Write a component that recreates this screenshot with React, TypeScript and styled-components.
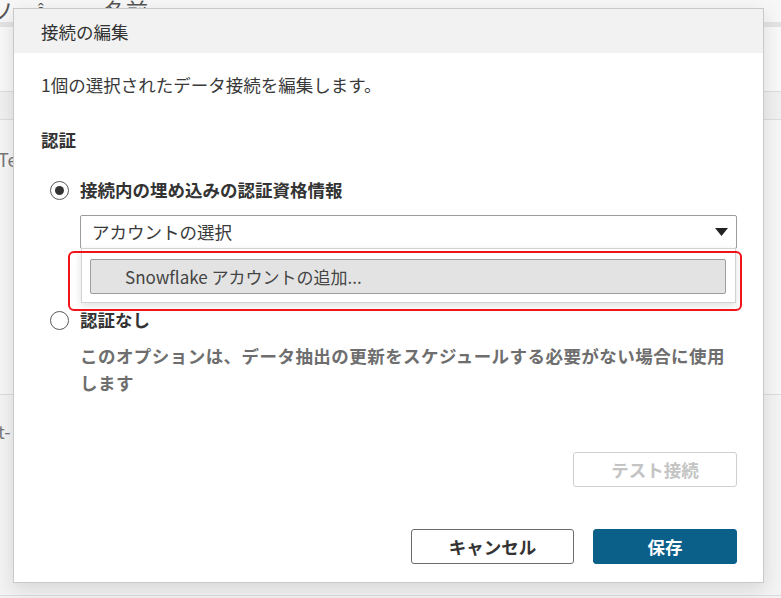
import React from 'react';
import styled, { createGlobalStyle } from 'styled-components';

const GlobalStyle = createGlobalStyle`
  html, body {
    margin: 0;
    padding: 0;
  }
  body {
    background: #f3f3f3;
    font-family: "Noto Sans CJK JP", "Noto Sans", sans-serif;
  }
`;

const Page = styled.div`
  position: relative;
  width: 781px;
  height: 598px;
  overflow: hidden;
  background: #f2f2f2;
`;

/* faded app behind the modal */
const Backdrop = styled.div`
  display: flex;
  flex-direction: column;
  height: 100%;
  color: #555;
`;

const BackTop = styled.div`
  display: flex;
  align-items: flex-end;
  height: 22px;
  background: #f7f7f7;
  font-size: 22px;
  line-height: 22px;
  overflow: hidden;
  white-space: nowrap;
`;

const BackGlyph = styled.span<{ $w: number; $size?: number; $shift?: number }>`
  display: block;
  flex-shrink: 0;
  width: ${({ $w }) => $w}px;
  font-size: ${({ $size }) => $size || 22}px;
  transform: translate(${({ $shift }) => $shift || 0}px, -2px);
`;

const BackBand = styled.div`
  height: 5px;
  background: #e3e3e3;
`;

const BackRow = styled.div<{ $h: number; $bg?: string }>`
  height: ${({ $h }) => $h}px;
  background: ${({ $bg }) => $bg || '#f5f5f5'};
  border-bottom: 1px solid #dcdcdc;
  display: flex;
  align-items: center;
  font-size: 18px;
  color: #777;
  white-space: nowrap;
`;

const BackLabel = styled.span<{ $x: number; $y: number }>`
  transform: translate(${({ $x }) => $x}px, ${({ $y }) => $y}px);
`;

const Modal = styled.div`
  position: absolute;
  left: 13px;
  top: 8px;
  width: 751px;
  height: 575px;
  box-sizing: border-box;
  background: #fff;
  border: 1px solid #c9c9c9;
  box-shadow: 0 6px 18px rgba(0, 0, 0, 0.12);
  display: flex;
  flex-direction: column;
`;

const Header = styled.div`
  height: 44px;
  flex-shrink: 0;
  background: #f2f2f2;
  display: flex;
  align-items: center;
  padding-left: 27px;
  font-size: 17.5px;
  color: #333;
`;

const Body = styled.div`
  flex: 1;
  display: flex;
  flex-direction: column;
  padding: 0 26px 18px 27px;
  color: #333;
  font-size: 17.5px;
  line-height: 24px;
`;

const Intro = styled.div`
  margin-top: 20px;
  color: #3a3a3a;
`;

const SectionTitle = styled.div`
  margin-top: 31px;
  font-weight: 700;
  color: #333;
`;

const RadioRow = styled.label<{ $top: number }>`
  display: flex;
  align-items: center;
  gap: 11px;
  margin-top: ${({ $top }) => $top}px;
  padding-left: 9px;
  font-weight: 700;
  color: #333;
`;

const RadioCircle = styled.span<{ $on?: boolean }>`
  width: 19px;
  height: 19px;
  box-sizing: border-box;
  border: 1.5px solid #5a5a5a;
  border-radius: 50%;
  display: flex;
  align-items: center;
  justify-content: center;
  background: #fff;

  &::after {
    content: '';
    width: 9px;
    height: 9px;
    border-radius: 50%;
    background: ${({ $on }) => ($on ? '#333' : 'transparent')};
  }
`;

const Indent = styled.div`
  padding-left: 39px;
`;

const SelectWrap = styled.div`
  position: relative;
  margin-top: 13px;
`;

const Select = styled.div`
  height: 34px;
  box-sizing: border-box;
  border: 1px solid #9c9c9c;
  border-radius: 2px;
  display: flex;
  align-items: center;
  justify-content: space-between;
  padding: 0 8px 0 11px;
  color: #3a3a3a;
`;

const Menu = styled.div`
  position: absolute;
  left: 1px;
  right: 1px;
  top: 33px;
  height: 55px;
  box-sizing: border-box;
  background: #fff;
  border: 1px solid #d2d2d2;
  box-shadow: 0 3px 8px rgba(0, 0, 0, 0.12);
  padding: 10px 9px 0 8px;
  z-index: 2;
`;

const MenuItem = styled.div`
  height: 35px;
  box-sizing: border-box;
  background: #e3e3e3;
  border: 1px solid #9d9d9d;
  border-radius: 2px;
  display: flex;
  align-items: center;
  padding-left: 34px;
  font-size: 17px;
  color: #444;
`;

const Highlight = styled.div`
  position: absolute;
  left: -12px;
  right: -5px;
  top: 36px;
  height: 60px;
  box-sizing: border-box;
  border: 2px solid #f0141a;
  border-radius: 6px;
  z-index: 3;
  pointer-events: none;
`;

const Note = styled.div`
  margin-top: 10px;
  font-weight: 700;
  color: #6e6e6e;
  line-height: 27px;
  letter-spacing: 0.45px;
`;

const TestRow = styled.div`
  display: flex;
  justify-content: flex-end;
  margin-top: 56px;
`;

const Footer = styled.div`
  display: flex;
  justify-content: flex-end;
  gap: 19px;
  margin-top: auto;
`;

const Button = styled.button<{ $variant: 'ghost' | 'outline' | 'primary'; $w: number }>`
  width: ${({ $w }) => $w}px;
  height: 35px;
  box-sizing: border-box;
  border-radius: 3px;
  font-family: inherit;
  font-size: 17.5px;
  font-weight: 700;
  cursor: pointer;
  border: 1px solid
    ${({ $variant }) =>
      $variant === 'primary' ? '#0a6089' : $variant === 'outline' ? '#6c6c6c' : '#cfcfcf'};
  background: ${({ $variant }) => ($variant === 'primary' ? '#0a6089' : '#fff')};
  color: ${({ $variant }) =>
    $variant === 'primary' ? '#fff' : $variant === 'outline' ? '#333' : '#c4c4c4'};
`;

const Caret = () => (
  <svg width="13" height="8" viewBox="0 0 13 8">
    <path d="M0 0h13L6.5 8z" fill="#222" />
  </svg>
);

const App: React.FC = () => {
  return (
    <>
      <GlobalStyle />
      <Page>
        <Backdrop>
          <BackTop>
            <BackGlyph $w={36} $shift={-9}>ソ</BackGlyph>
            <BackGlyph $w={68} $size={16}>ô</BackGlyph>
            <BackGlyph $w={60}>名前</BackGlyph>
          </BackTop>
          <BackBand />
          <BackRow $h={64} $bg="#f8f8f8" />
          <BackRow $h={27} $bg="#f0f0f0" />
          <BackRow $h={274} $bg="#f6f6f6">
            <BackLabel $x={-2} $y={-98}>Te</BackLabel>
          </BackRow>
          <BackRow $h={200} $bg="#f3f3f3">
            <BackLabel $x={-2} $y={-64}>t-</BackLabel>
          </BackRow>
        </Backdrop>

        <Modal>
          <Header>接続の編集</Header>
          <Body>
            <Intro>1個の選択されたデータ接続を編集します。</Intro>
            <SectionTitle>認証</SectionTitle>

            <RadioRow $top={26}>
              <RadioCircle $on />
              接続内の埋め込みの認証資格情報
            </RadioRow>

            <Indent>
              <SelectWrap>
                <Select>
                  アカウントの選択
                  <Caret />
                </Select>
                <Menu>
                  <MenuItem>Snowflake アカウントの追加...</MenuItem>
                </Menu>
                <Highlight />
              </SelectWrap>
            </Indent>

            <RadioRow $top={59}>
              <RadioCircle />
              認証なし
            </RadioRow>

            <Indent>
              <Note>
                このオプションは、データ抽出の更新をスケジュールする必要がない場合に使用します
              </Note>
            </Indent>

            <TestRow>
              <Button $variant="ghost" $w={164}>
                テスト接続
              </Button>
            </TestRow>

            <Footer>
              <Button $variant="outline" $w={163}>
                キャンセル
              </Button>
              <Button $variant="primary" $w={144}>
                保存
              </Button>
            </Footer>
          </Body>
        </Modal>
      </Page>
    </>
  );
};

export default App;
